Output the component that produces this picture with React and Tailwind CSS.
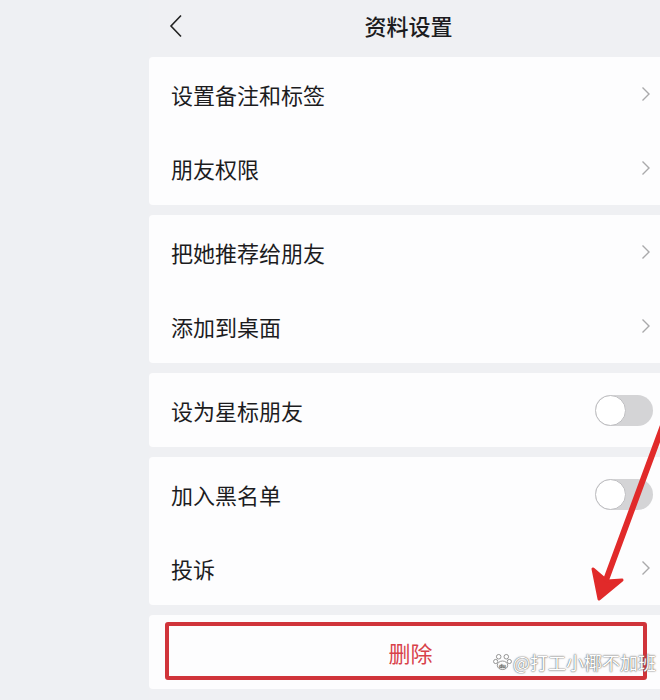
import React from "react";

const font = { fontFamily: '"Noto Sans CJK SC", "Noto Sans", sans-serif' };

const Chevron = () => (
  <svg width="10" height="16" viewBox="0 0 10 16" className="mr-[9px]">
    <path d="M1.5 1.5 L8 8 L1.5 14.5" fill="none" stroke="#a9a9ab" strokeWidth="1.4" />
  </svg>
);

const Toggle = () => (
  <div className="relative w-[58px] h-[31px] rounded-full bg-[#d4d4d6] mr-[7px]">
    <div className="absolute left-0 top-0 w-[31px] h-[31px] rounded-full bg-white border border-[#bfbfc2]" />
  </div>
);

const Row = ({ label, right }) => (
  <div className="h-[74px] flex items-center justify-between pl-[22px]">
    <span className="text-[22px] text-[#1c1c1e] leading-none">{label}</span>
    {right === "toggle" ? <Toggle /> : <Chevron />}
  </div>
);

const Group = ({ children }) => (
  <div className="bg-[#fdfdfe] rounded-l-[4px]">{children}</div>
);

export default function App() {
  return (
    <div className="relative w-[660px] h-[700px] overflow-hidden flex bg-[#eff0f3]" style={font}>
      <div className="w-[149px] shrink-0 bg-[#eef0f3]" />
      <div className="flex-1 flex flex-col">
        <div className="h-[57px] relative flex items-center justify-center pb-[8px]">
          <svg width="14" height="24" viewBox="0 0 14 24" className="absolute left-[20px] top-[14px]">
            <path d="M12 1.5 L2 12 L12 22.5" fill="none" stroke="#222" strokeWidth="1.6" />
          </svg>
          <span className="text-[22px] font-medium text-[#1c1c1e] ml-[8px] leading-none">资料设置</span>
        </div>
        <div className="flex flex-col gap-[10px]">
          <Group>
            <Row label="设置备注和标签" />
            <Row label="朋友权限" />
          </Group>
          <Group>
            <Row label="把她推荐给朋友" />
            <Row label="添加到桌面" />
          </Group>
          <Group>
            <Row label="设为星标朋友" right="toggle" />
          </Group>
          <Group>
            <Row label="加入黑名单" right="toggle" />
            <Row label="投诉" />
          </Group>
          <Group>
            <div className="relative h-[74px] flex items-center justify-center">
              <span className="text-[22px] text-[#d8424a] ml-[12px]">删除</span>
              <div className="absolute left-[16px] top-[7px] w-[482px] h-[58px] border-[4px] border-[#d0343a] rounded-[3px]" />
            </div>
          </Group>
        </div>
      </div>

      {/* annotation arrow */}
      <svg className="absolute left-0 top-0 pointer-events-none" width="660" height="700">
        <line x1="668" y1="412" x2="606" y2="580" stroke="#e12a2a" strokeWidth="6" strokeLinecap="round" />
        <path d="M599 599 L593 569 L607 581 L622 580 Z" fill="#e12a2a" stroke="#e12a2a" strokeWidth="3" strokeLinejoin="round" />
      </svg>

      {/* watermark */}
      <div className="absolute left-[493px] top-[652px] flex items-center gap-[1px] text-white text-[18px] leading-none [text-shadow:0_0_1px_#555,0_0_2px_#777]">
        <svg width="19" height="19" viewBox="0 0 20 20">
          <g fill="#fff" stroke="#777" strokeWidth="0.8">
            <circle cx="6" cy="5" r="2.4" />
            <circle cx="14" cy="5" r="2.4" />
            <circle cx="2.8" cy="10" r="2.2" />
            <circle cx="17.2" cy="10" r="2.2" />
            <ellipse cx="10" cy="14" rx="5.5" ry="4.5" />
          </g>
          <text x="10" y="16.5" fontSize="6" textAnchor="middle" fill="#666" fontFamily="Liberation Sans">du</text>
        </svg>
        <span>@打工小椰不加班</span>
      </div>
    </div>
  );
}
